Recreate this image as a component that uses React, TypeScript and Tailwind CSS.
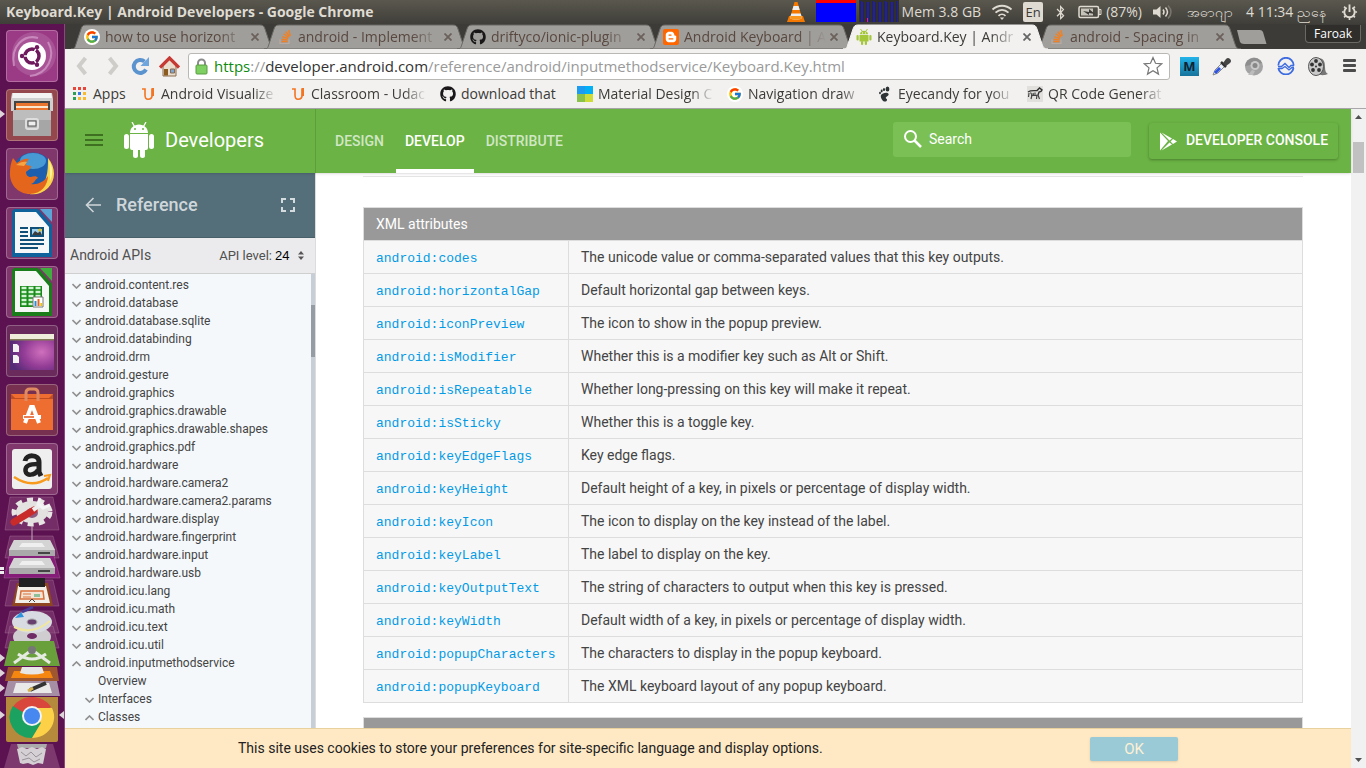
import React from "react";
import { FcGoogle } from "react-icons/fc";
import { FaGithub, FaBloggerB, FaBluetoothB } from "react-icons/fa";

const uiFont = "font-['Open_Sans','Noto_Sans',sans-serif]";
const roboto = "font-['Roboto',sans-serif]";

/* ---------- small icons ---------- */

const GoogleIcon = () => (
  <span className="flex size-4 items-center justify-center rounded-full bg-white">
    <FcGoogle size={14} />
  </span>
);
const GithubIcon = () => <FaGithub size={16} color="#191717" />;
const StackIcon = () => (
  <svg width="16" height="16" viewBox="0 0 16 16" fill="none">
    <path d="M3 10.500v4h9v-4" stroke="#b7aba3" strokeWidth="1.200" />
    <path d="M4.500 12.500h6M4.600 10.200l6 .7M5.200 7.600l5.700 1.900M6.600 4.800l5 3.600M8.700 2.500l3.700 5M11.800 1l1.500 6" stroke="#f08024" strokeWidth="1.400" />
  </svg>
);
const BloggerIcon = () => (
  <span className="flex size-4 items-center justify-center rounded-xs bg-[#ff6600]">
    <FaBloggerB size={12} color="#fff" />
  </span>
);
const AndroidSmall = () => (
  <svg width="16" height="16" viewBox="0 0 16 16" fill="#a4c639">
    <path d="M4 5.200C4 3.200 5.800 1.800 8 1.800s4 1.400 4 3.400zM3.500 6h9v6.500h-9z" />
    <rect x="0.500" y="6" width="2.200" height="5.500" rx="1" />
    <rect x="13.300" y="6" width="2.200" height="5.500" rx="1" />
    <rect x="5" y="12" width="2.200" height="4" rx="1" />
    <rect x="8.800" y="12" width="2.200" height="4" rx="1" />
    <path d="M4.500 0l2 2.500M11.500 0l-2 2.500" stroke="#a4c639" />
    <path d="M6 3.500h1v1H6zM9 3.500h1v1H9z" fill="#fff" />
  </svg>
);
const UdacityIcon = () => (
  <svg width="16" height="16" viewBox="0 0 16 16" fill="none" stroke="#f37421">
    <path d="M2 3h3v6c0 3 1 4.300 3 4.300 2.600 0 4.200-1.700 4.200-4.500V3" strokeWidth="1.600" />
    <path d="M12.700 2v8" strokeWidth="2.600" />
  </svg>
);
const AppsIcon = () => (
  <svg width="16" height="16" viewBox="0 0 16 16">
    {["#e8453c", "#e8453c", "#e8453c", "#2f9e55", "#3b78e7", "#f9bb2d", "#2f9e55", "#f9bb2d", "#f9bb2d"].map((c, i) => (
      <rect key={i} x={1 + (i % 3) * 5} y={1 + Math.floor(i / 3) * 5} width="3" height="3" fill={c} />
    ))}
  </svg>
);
const MaterialIcon = () => (
  <svg width="16" height="16">
    <path d="M0 0h8v8H0z" fill="#1d9bf0" />
    <path d="M8 0h8v8H8z" fill="#04b0f5" />
    <path d="M0 8h8v8H0z" fill="#8bc34a" />
    <path d="M8 8h8v8H8z" fill="#cddc39" />
  </svg>
);
const FootIcon = () => (
  <svg width="16" height="16" viewBox="0 0 16 16" fill="#2e3436">
    <ellipse cx="10.500" cy="3" rx="1.900" ry="2.600" />
    <ellipse cx="7" cy="3.500" rx="1.100" ry="1.600" />
    <ellipse cx="4.700" cy="5" rx="1" ry="1.400" />
    <ellipse cx="3" cy="7" rx=".9" ry="1.200" />
    <path d="M4 9c1-2 6.500-3.500 7.500-1.200.8 2-2.600 2.600-2.800 4 0 1 1.600.8 1.300 2.300-.4 2-3.500 2-4.700 0C4.400 12.500 3.300 11 4 9z" />
  </svg>
);
const ZebraIcon = () => (
  <svg width="16" height="16" viewBox="0 0 16 16">
    <rect width="16" height="16" fill="#e2e0dd" />
    <path d="M1 6c3-2 6-1 9-1.500L12.500 2 15 4l-1 1.500-2 .5-1 3" fill="none" stroke="#333" strokeWidth="1.400" />
    <path d="M2 7l-.5 4M3.500 6.500L5 9l-1 4M6 7l.5 2M8 6.500V9M11 9l1.500 4M10 8.500l-.5 4.500M4 9.500h6" fill="none" stroke="#444" strokeWidth="1.200" />
  </svg>
);

/* ---------- desktop panel ---------- */

function TopPanel() {
  return (
    <header className={`flex h-6 flex-none items-center bg-linear-to-b from-[#5a584e] to-[#3f3e39] text-[#dfdbd2] ${uiFont}`}>
      <h1 className="flex-1 truncate pl-[6px] text-[14px] leading-6 font-bold">Keyboard.Key | Android Developers - Google Chrome</h1>
      <div className="flex items-center gap-[10px] pr-2 text-[14px] leading-6 whitespace-nowrap">
        <svg width="20" height="22" viewBox="0 0 20 22" aria-label="VLC">
          <path d="M3 15h14l2 6H1z" fill="#f57900" />
          <path d="M8.500 1h3L16 17c-2 2-10 2-12 0z" fill="#f57900" />
          <path d="M7.500 5h5l1.200 4H6.300zM5.300 12.500h9.400L16 17c-2 2-10 2-12 0z" fill="#eee" />
          <path d="M4.700 15h10.600l.7 2c-2 2-10 2-12 0z" fill="#f8961e" />
        </svg>
        <div className="flex gap-[3px]">
          <svg width="40" height="22">
            <path d="M0 0h40v22H0z" fill="#00f" />
            <path d="M0 0h40v3H0z" fill="#f00" />
          </svg>
          <svg width="40" height="22">
            <path d="M0 0h40v22H0z" fill="#302f2b" />
            {Array.from({ length: 13 }, (_, i) => (
              <path key={i} d={`M${i * 3 + 1.5} ${i % 4 ? 2 : 1}v22`} stroke="#1616c0" />
            ))}
            <path d="M8.500 18v4" stroke="#f22" />
          </svg>
          <span>Mem 3.8 GB</span>
        </div>
        <svg width="22" height="18" viewBox="0 0 22 18" fill="none" stroke="#dfdbd2" strokeWidth="1.800">
          <path d="M1.500 6.500c5.500-5 13.500-5 19 0M4.500 9.700c4-3.600 9-3.600 13 0M7.500 12.800c2-2 5-2 7 0" />
          <path d="M11 17l-2.200-2.500h4.400z" fill="#dfdbd2" stroke="none" />
        </svg>
        <span className="flex h-5 w-5 items-center justify-center rounded-xs bg-[#dfdbd2] text-[13px] text-[#3c3b37]">En</span>
        <FaBluetoothB size={15} />
        <span className="flex items-center gap-1">
          <svg width="24" height="14" viewBox="0 0 24 14">
            <rect x="1" y="1.500" width="19.500" height="11" rx="1.500" fill="none" stroke="#dfdbd2" strokeWidth="1.500" />
            <path d="M21 4.500h2v5h-2z" fill="none" stroke="#dfdbd2" />
            <path d="M3 3.500h12v7H3z" fill="#c6c3bb" />
            <path d="M5 6l6 1V4l6 5-6-1v2z" fill="#3c3b37" />
          </svg>
          (87%)
        </span>
        <svg width="21" height="16" viewBox="0 0 21 16" fill="none" stroke="#dfdbd2" strokeWidth="1.500">
          <path d="M1 5.500h3.500L8.500 2v12l-4-3.500H1z" fill="#dfdbd2" stroke="none" />
          <path d="M11 5.500q2 2.500 0 5M13.500 3.500q4 4.500 0 9" />
          <path d="M16 1.500q6 6.500 0 13" stroke="#77756c" />
        </svg>
        <time className="flex w-[148px] justify-between px-1">
          <span>အဓာဂျာ</span>
          <span>4 11:34 ညနေ</span>
        </time>
        <svg width="17" height="18" viewBox="0 0 18 18" fill="none" stroke="#dfdbd2">
          <path d="M6 4.500a5.500 5.500 0 1 0 6 0" strokeWidth="2" />
          <path d="M9 1v8" strokeWidth="2" />
          <path d="M1 9h2M15 9h2M3.300 3.300l1.500 1.500M14.700 3.300l-1.500 1.500M3.300 14.700l1.500-1.500M14.700 14.700l-1.500-1.500M9 15v2.500" strokeWidth="1.800" />
        </svg>
      </div>
    </header>
  );
}

/* ---------- launcher ---------- */

const launcherItems = [
  {
    name: "Search your computer",
    tile: "bg-[#9b3b85]",
    icon: (
      <>
        <circle cx="28" cy="24" r="22" fill="#b364a3" opacity=".6" />
        <path d="M8 36C4 16 18 4 32 8M42 12c8 14 0 32-18 34" fill="none" stroke="#d59fcb" strokeWidth="2" opacity=".7" />
        <circle cx="26" cy="26" r="14" fill="#fff" />
        <circle cx="26" cy="26" r="7" fill="none" stroke="#6f1a5d" strokeWidth="3.500" />
        <path d="M26 26H12M26 26l6-11M26 26l6 11" stroke="#fff" strokeWidth="1.500" />
        <circle cx="26" cy="26" r="4.800" fill="#fff" />
        <circle cx="16" cy="26" r="2.200" fill="#6f1a5d" />
        <circle cx="31" cy="17.300" r="2.200" fill="#6f1a5d" />
        <circle cx="31" cy="34.700" r="2.200" fill="#6f1a5d" />
      </>
    ),
  },
  {
    name: "Files",
    tile: "bg-[#94474c]",
    icon: (
      <>
        <path d="M6 4h40l1 6v12H5V10z" fill="#cfcfcf" />
        <path d="M7 4h38l1 5H6z" fill="#f3f3f3" />
        <path d="M8 12h36v12H8z" fill="#444" />
        <path d="M10 14h32v7H10z" fill="#e9752f" />
        <path d="M10 17h32v2H10z" fill="#fbe6d0" />
        <path d="M7 21h38v10H7z" fill="#bdbdbd" />
        <path d="M7 31h38v16H7z" fill="#a6a6a6" />
        <rect x="20" y="30" width="12" height="10" rx="2" fill="#bbb" stroke="#dedede" strokeWidth="2" />
        <rect x="22" y="32" width="8" height="5" fill="#eee" stroke="#555" />
      </>
    ),
  },
  {
    name: "Firefox",
    tile: "bg-[#7f376c]",
    icon: (
      <>
        <circle cx="27" cy="25" r="20.500" fill="#1c5fae" />
        <ellipse cx="27" cy="13" rx="13" ry="8" fill="#5bb4e6" opacity=".7" />
        <path d="M42 10c8 10 8 22 0 30-7 7-17 8-24 4 12 0 20-6 22-14 2-7 2-13 2-20z" fill="#fbd34a" />
        <path d="M7 10l4 5c4-3 8-5 12-4-2 2-3 4-3 6l5 1c0 3-3 4-5 6 0 3 2 5 5 5 3-1 6-1 7 1-3 1-3 5-7 6 6 1 13-2 17-8 0 9-7 18-18 18C11 46 3 35 4 24c0-5 1-10 3-14z" fill="#e4661c" />
        <path d="M10 17c4-3 8-4 11-3l-3 4z" fill="#f6a545" />
        <path d="M43 13c4 6 4 14 1 20 0-6 0-13-1-20z" fill="#fff2a0" />
      </>
    ),
  },
  {
    name: "LibreOffice Writer",
    tile: "bg-[#7f376c]",
    icon: (
      <>
        <path d="M8 2h24l14 16v32H6V4z" fill="#10629c" />
        <path d="M34 2h12v13z" fill="#5aa5d6" />
        <path d="M9 5h21l13 15v26H9z" fill="#f5f7f8" />
        <path d="M14 21h8M14 25h8M14 29h8M14 33h24M14 37h24M14 41h18" stroke="#0f4f78" strokeWidth="2" />
        <path d="M24 20h14v10H24z" fill="#0f4f78" />
        <path d="M26 22h10v6H26z" fill="#9fd0ef" />
        <path d="M26 28l3-4 3 2 2-2 2 4z" fill="#3c3c3c" />
        <circle cx="34" cy="23" r="1.500" fill="#f3c200" />
      </>
    ),
  },
  {
    name: "LibreOffice Calc",
    tile: "bg-[#7f376c]",
    icon: (
      <>
        <path d="M8 2h24l14 16v32H6V4z" fill="#1a7d1a" />
        <path d="M34 2h12v13z" fill="#3fae3f" />
        <path d="M9 5h21l13 15v26H9z" fill="#f5f8f5" />
        <path d="M14 20h22v21H14z" fill="#168a16" />
        {[22, 26, 30, 34, 38].map((y) => (
          <path key={y} d={`M15.500 ${y}h5M22.500 ${y}h5M29.500 ${y}h5`} stroke="#d2f4d2" strokeWidth="2.500" />
        ))}
        <path d="M27 31h10v10H27z" fill="#fff" stroke="#777" />
        <path d="M29.500 40v-5" stroke="#2b8dd6" strokeWidth="2" />
        <path d="M32.500 40v-7" stroke="#e9641c" strokeWidth="2" />
        <path d="M35.300 40v-3" stroke="#e9c21c" strokeWidth="2" />
      </>
    ),
  },
  {
    name: "Desktop",
    tile: "bg-[#6a2a5b]",
    icon: (
      <>
        <defs>
          <radialGradient id="wallpaper" cx=".72" cy=".5" r=".75">
            <stop offset="0" stopColor="#d070bd" />
            <stop offset=".55" stopColor="#933c96" />
            <stop offset="1" stopColor="#532a75" />
          </radialGradient>
        </defs>
        <path d="M4 9h44v36H4z" fill="url(#wallpaper)" />
        <path d="M4 9h44v5H4z" fill="#f1eddb" />
        <path d="M4 14h44v1.500H4z" fill="#827d55" />
        <path d="M7 19h4l2 2v6H7zM7 30h4l2 2v6H7z" fill="#f2f2f2" />
      </>
    ),
  },
  {
    name: "Ubuntu Software",
    tile: "bg-[#77304f]",
    icon: (
      <>
        <path d="M5 10h42v36H5z" fill="#ee6d30" />
        <path d="M5 10l4 4h34l4-4v5H5z" fill="#bf4d1f" />
        <path d="M20 17V9q0-4 4-4h4q4 0 4 4v8" fill="none" stroke="#e08a62" strokeWidth="3" />
        <path d="M19 39l6-16h2l6 16" fill="none" stroke="#fff" strokeWidth="4" />
        <path d="M17 33h18" stroke="#fff" strokeWidth="4" />
        <path d="M18 33h10" stroke="#e2571d" strokeWidth="1.500" />
      </>
    ),
  },
  {
    name: "Amazon",
    tile: "bg-[#7f376c]",
    icon: (
      <>
        <rect x="6" y="6" width="40" height="40" rx="3" fill="#efefef" />
        <path d="M19 18c1-7 14-7 14 1v10l2 4" fill="none" stroke="#222" strokeWidth="5" />
        <path d="M32 21c-9 0-13 2-12.500 7 .5 5 9 5 12.500-1" fill="none" stroke="#222" strokeWidth="4.500" />
        <path d="M8 34q18 12 34 1" fill="none" stroke="#f79a1e" strokeWidth="2.500" />
        <path d="M38 33l6-1-2 6" fill="none" stroke="#f79a1e" strokeWidth="2" />
      </>
    ),
  },
];

const arrowRight = (y: number) => <path d={`M0 ${y - 4}l5 4-5 4z`} fill="#ddd5da" />;

function FoldedStack() {
  return (
    <svg className="block flex-none" width="65" height="200" viewBox="0 496 65 200" aria-label="Folded launcher items">
      <g fill="#8c4a7b" fillOpacity=".5" stroke="#b584a8" strokeOpacity=".35">
        <path d="M10 497h43l6 33H5z" />
        <path d="M10 536h43l6 22H5z" />
        <path d="M10 552h43l7 26H4z" fill="#8a1f7c" fillOpacity=".9" />
        <path d="M10 580h43l6 26H5z" />
        <path d="M10 611h43l6 22H5z" />
        <path d="M10 626h43l6 22H5z" />
      </g>
      <g fill="#d9d7d5">
        <ellipse cx="32" cy="512" rx="18" ry="12" fill="none" stroke="#e8e6e4" strokeWidth="5" strokeDasharray="6 5" />
        <ellipse cx="32" cy="512" rx="16" ry="11" fill="#e4e2e0" />
        <ellipse cx="32" cy="513" rx="6" ry="5" fill="#8c5b80" />
        <path d="M14 522l20-12" stroke="#c92b2b" strokeWidth="7" strokeLinecap="round" />
        <path d="M33 510l10-7" stroke="#eee" strokeWidth="4" />
        <path d="M40 498l-2 6 5 4 7-3" fill="none" stroke="#f4f4f4" strokeWidth="3" />
        <path d="M32 526v18" stroke="#c2aebb" />
      </g>
      {[540, 558].map((y) => (
        <g key={y}>
          <path d={`M14 ${y}h36l5 10v6H9v-6z`} fill="#aaa" />
          <path d={`M14 ${y}h36l5 10H9z`} fill="#d4d4d4" />
          <path d={`M22 ${y + 3}h20l3 4H19z`} fill="#efefef" />
          <path d={`M38 ${y + 13}h12`} stroke="#444" strokeWidth="2" />
        </g>
      ))}
      <path d="M17 583h31l5 23H12z" fill="#8f451f" />
      <path d="M18 586h28l4 17H15z" fill="#f2efe9" />
      <path d="M19 578h26v9H19z" fill="#222" />
      <path d="M21 591h22l1 8H20z" fill="#f4e4d6" stroke="#d8703c" strokeWidth="1.500" />
      <path d="M23 594h8M23 597h8" stroke="#d8703c" />
      <path d="M34 594h6v3h-6z" fill="#8fc09a" />
      <path d="M29 602l3-3 3 3" stroke="#444" fill="none" />
      <ellipse cx="32" cy="637" rx="19" ry="11" fill="#cfcdd0" />
      <ellipse cx="32" cy="636" rx="5" ry="3" fill="#6f2b66" />
      <ellipse cx="32" cy="622" rx="20" ry="11" fill="#d9dbe2" />
      <path d="M14 627q18 9 36-6" stroke="#efe6a0" strokeWidth="2" fill="none" />
      <ellipse cx="32" cy="622" rx="5" ry="3" fill="#68406f" stroke="#aaa" />
      <path d="M15 618l6-6 3 5z" fill="#2c93dd" />
      <path d="M22 612l11-5" stroke="#4a3a91" strokeWidth="3" />
      <path d="M10 641h44l6 25H4z" fill="#69a03c" />
      <path d="M14 663l15-11h6l15 11M18 654q14 10 28 0" stroke="#e5ebe0" strokeWidth="3" fill="none" />
      <circle cx="32" cy="650" r="4" fill="#777" />
      <path d="M8 667h49l2 14H5z" fill="#9f5730" />
      <path d="M14 671h36l3 7H11z" fill="#f58610" />
      <path d="M22 667h20l2 6q-12 3-24 0z" fill="#e7e7e7" />
      <path d="M8 681h49l3 15H4z" fill="#a68ea5" />
      <path d="M16 683h33l3 10H13z" fill="#e9e9e9" />
      <path d="M30 690l16-7" stroke="#333" strokeWidth="4" />
      <path d="M28 691l5-3" stroke="#d7b14c" strokeWidth="3" />
      <path d="M0 567h4v3H0zM0 571h4v3H0z" fill="#eee" />
      {arrowRight(658)}
      {arrowRight(673)}
      {arrowRight(688)}
    </svg>
  );
}

function Launcher() {
  return (
    <nav aria-label="Launcher" className="flex w-[65px] flex-none flex-col border-r border-[#8d4680] bg-[#5c1150] pt-[6px]">
      {launcherItems.map((item) => (
        <button
          key={item.name}
          aria-label={item.name}
          className={`relative mb-[7px] ml-[6px] size-13 flex-none rounded-[4px] border border-white/25 ${item.tile}`}
        >
          <svg className="-m-px block" width="52" height="52">
            {item.icon}
          </svg>
          {item.name === "Files" && (
            <svg className="absolute top-5 -left-[7px]" width="5" height="8">
              {arrowRight(4)}
            </svg>
          )}
        </button>
      ))}
      <div className="-mt-[6px] flex flex-none flex-col">
        <FoldedStack />
        <button aria-label="Chrome" className="block">
          <svg className="block" width="65" height="48" viewBox="0 696 65 48">
            <path d="M6 697h52v43q0 2-2 2H8q-2 0-2-2z" fill="#b58a3d" />
            <path d="M32 718L12.900 707a22 20 0 0 1 38.100 0z" fill="#d9463b" />
            <path d="M12.900 706L32 718l9 5-9 15A22 21 0 0 1 12.900 706z" fill="#1ba261" />
            <path d="M32 708h20a22 21 0 0 1-20 30l9-15z" fill="#fcd148" />
            <circle cx="32" cy="716" r="10" fill="#f3f3f3" />
            <circle cx="32" cy="716" r="8" fill="#4687f0" />
            {arrowRight(715)}
            <path d="M64 711l-5 4 5 4z" fill="#ddd5da" />
          </svg>
        </button>
        <button aria-label="Trash" className="block">
          <svg className="block" width="65" height="24" viewBox="0 744 65 24">
            <path d="M11 744h42l7 24H4z" fill="#8c4a7b" fillOpacity=".7" />
            <path d="M17 744h30l-1 4H18z" fill="#aaa" />
            <path d="M17 749l5-2 5 2 5-2 5 2 5-2 4 2-3 15-5-1-5 2-5-2-5 1-3-1z" fill="#d4d0d3" />
            <path d="M21 752l5 4 5-4 5 5 6-4M22 760l7-2 5 4 6-3" stroke="#9a929a" fill="none" />
          </svg>
        </button>
      </div>
    </nav>
  );
}

/* ---------- browser chrome ---------- */

const fade = "mask-r-from-80%";

const tabs = [
  { title: "how to use horizont", Icon: GoogleIcon, active: false },
  { title: "android - Implement", Icon: StackIcon, active: false },
  { title: "driftyco/ionic-plugin", Icon: GithubIcon, active: false },
  { title: "Android Keyboard | A", Icon: BloggerIcon, active: false },
  { title: "Keyboard.Key | Andr", Icon: AndroidSmall, active: true },
  { title: "android - Spacing in", Icon: StackIcon, active: false },
];

function TabStrip() {
  return (
    <div className="flex h-[25px] flex-none overflow-hidden bg-[#3c3b37] pl-[6px]">
      {tabs.map((t, i) => (
        <div
          key={i}
          className={`relative flex w-[193px] flex-none items-center pl-[13px] text-[14px] leading-6 ${t.active ? "z-10 text-[#3c3b37]" : "text-[#58483f]"}`}
        >
          <svg className="absolute top-0 left-0" width="209" height="25" viewBox="0 0 209 25">
            <path
              d="M0 25c4 0 4-2 5-5L10 5c1-3 2-4 5-4h174c3 0 4 1 5 4l5 15c1 3 2 5 6 5z"
              fill={t.active ? "#f2f1f0" : "#a09e9b"}
              stroke={t.active ? "#f2f1f0" : "#6b6964"}
            />
          </svg>
          <span className="relative flex w-4 flex-none justify-center">
            <t.Icon />
          </span>
          <span className={`relative ml-[5px] w-[142px] overflow-hidden whitespace-nowrap ${fade}`}>{t.title}</span>
          <button aria-label="Close tab" className="relative ml-1">
            <svg width="8" height="8" viewBox="0 0 8 8" stroke={t.active ? "#666" : "#6b605a"} strokeWidth="1.800">
              <path d="M.5.5l7 7M7.500.5l-7 7" />
            </svg>
          </button>
        </div>
      ))}
      <button aria-label="New tab" className="ml-1 flex flex-none items-center pl-[4px]">
        <svg width="30" height="14" viewBox="0 0 30 14">
          <path d="M0 0h23q2 0 3 2l3.500 12H7q-3 0-4-2z" fill="#a09e9b" />
        </svg>
      </button>
      <button className="mt-px mr-[5px] ml-auto h-[18px] w-14 flex-none self-start rounded-b-[4px] border border-t-0 border-[#6b6964] bg-[#2f2e2b] text-[12px] leading-4 text-white">
        Faroak
      </button>
    </div>
  );
}

function Toolbar() {
  return (
    <div className="flex h-[34px] flex-none items-center bg-[#f2f1f0] pr-[9px] pl-[10px]">
      <div className="flex w-[113px] flex-none items-center">
        <button aria-label="Back" className="w-8">
          <svg width="13" height="20" viewBox="0 0 13 20" fill="none" stroke="#cfcdca" strokeWidth="4">
            <path d="M10.500 2L4 10l6.500 8" />
          </svg>
        </button>
        <button aria-label="Forward" className="w-6">
          <svg width="13" height="20" viewBox="0 0 13 20" fill="none" stroke="#cfcdca" strokeWidth="4">
            <path d="M2.500 2L9 10l-6.500 8" />
          </svg>
        </button>
        <button aria-label="Reload" className="w-7">
          <svg width="19" height="20" viewBox="0 0 19 20">
            <path d="M15 13.500a6.500 6.500 0 1 1-1.500-8" fill="none" stroke="#5b93cf" strokeWidth="4" />
            <path d="M18 1v9H9.500z" fill="#6ea5dc" />
          </svg>
        </button>
        <button aria-label="Home">
          <svg width="21" height="21" viewBox="0 0 21 21">
            <path d="M4 10l6.500-7 6.500 7v10H4z" fill="#eadfce" stroke="#8b6a4f" />
            <path d="M5 13h4v6.500H5z" fill="#8b5a1e" />
            <path d="M11.500 13h4v4h-4z" fill="#7aa6d8" stroke="#8b6a4f" />
            <path d="M1 11.500L10.500 2l9.500 9.500" fill="none" stroke="#c63a34" strokeWidth="3.200" />
          </svg>
        </button>
      </div>
      <div className="flex h-[27px] min-w-0 flex-1 items-center rounded-[3px] border border-[#bab8b5] bg-white px-[6px]">
        <svg className="flex-none" width="13" height="17" viewBox="0 0 13 17">
          <path d="M3 8V5a3.500 3.500 0 0 1 7 0v3" fill="none" stroke="#8b8b8b" strokeWidth="2" />
          <rect x="1" y="7" width="11" height="9" rx="1" fill="#7ed062" stroke="#5a9c42" />
        </svg>
        <span className="ml-[6px] min-w-0 flex-1 truncate text-[15px] leading-6 text-[#9a9a9a]">
          <span className="text-[#0f8b0f]">https</span>://<span className="text-[#333]">developer.android.com</span>
          /reference/android/inputmethodservice/Keyboard.Key.html
        </span>
        <button aria-label="Bookmark this page">
          <svg width="20" height="20" viewBox="0 0 20 20" fill="#fff" stroke="#777" strokeWidth="1.200">
            <path d="M10 1.500l2.500 5.800 6.200.5-4.700 4.100 1.500 6.200-5.500-3.400-5.500 3.400L6 11.900 1.300 7.800l6.200-.5z" />
          </svg>
        </button>
      </div>
      <div className="ml-[10px] flex flex-none items-center gap-[13px]">
        <span className="flex size-[19px] items-center justify-center bg-linear-to-b from-[#22b4ea] to-[#17739b] text-[13px] leading-none font-bold text-[#112233]">M</span>
        <svg width="19" height="19" viewBox="0 0 19 19">
          <path d="M1 18l2-5 7-7 3 3-7 7z" fill="#e8eefb" stroke="#888" />
          <path d="M3 16l5-5" stroke="#2f55e0" strokeWidth="3" />
          <path d="M9 5l5 5" stroke="#333" strokeWidth="2.500" />
          <path d="M11 6l3-4q2-2 4 0t0 4l-4 3z" fill="#444" />
        </svg>
        <svg width="20" height="19" viewBox="0 0 20 19">
          <circle cx="10" cy="9.500" r="9" fill="#a3a3a3" />
          <path d="M1 9a9 9 0 0 1 17-3z" fill="#8d8d8d" />
          <circle cx="11" cy="8.500" r="4.500" fill="#c9c9c9" />
          <circle cx="11" cy="8.500" r="2.500" fill="#888" />
          <path d="M4 18l4-5 3 1-2 4z" fill="#bcbcbc" />
        </svg>
        <svg width="18" height="18" viewBox="0 0 18 18" fill="none" stroke="#3d6be0" strokeWidth="1.800">
          <path d="M1.300 8.500a7.700 7.700 0 0 1 15.400 0M1.300 11a7.700 7.700 0 0 0 15.200 0" />
          <path d="M1 9.500h3.500L8 6.500l4 4 2-2h3M1.500 11.500h3.500l3-2 4 3.500 3-2.500h2" strokeWidth="1.300" />
        </svg>
        <svg width="20" height="19" viewBox="0 0 20 19">
          <path d="M10 1c6 0 7 4 7 9 0 4 1 6 3 7-5 2-8 1-10 0z" fill="#777" />
          <ellipse cx="8" cy="9.500" rx="7.500" ry="9" fill="#c9c9c9" stroke="#555" />
          <g fill="#333">
            <circle cx="8" cy="4" r="1.900" />
            <circle cx="4" cy="7.500" r="1.900" />
            <circle cx="12" cy="7.500" r="1.900" />
            <circle cx="5" cy="13" r="1.900" />
            <circle cx="11" cy="13" r="1.900" />
            <circle cx="8" cy="9.500" r="1" />
          </g>
        </svg>
        <button aria-label="Menu" className="ml-[2px]">
          <svg className="block" width="14" height="14" fill="#4c4c4c">
            <rect width="13" height="3" y="0" rx="1" />
            <rect width="13" height="3" y="5" rx="1" />
            <rect width="13" height="3" y="10" rx="1" />
          </svg>
        </button>
      </div>
    </div>
  );
}

const bookmarks = [
  { title: "Apps", Icon: AppsIcon, width: "w-[34px]", cut: false },
  { title: "Android Visualize", Icon: UdacityIcon, width: "w-[116px]", cut: true },
  { title: "Classroom - Udac", Icon: UdacityIcon, width: "w-[116px]", cut: true },
  { title: "download that", Icon: GithubIcon, width: "w-[103px]", cut: false },
  { title: "Material Design C", Icon: MaterialIcon, width: "w-[116px]", cut: true },
  { title: "Navigation draw", Icon: GoogleIcon, width: "w-[116px]", cut: true },
  { title: "Eyecandy for you", Icon: FootIcon, width: "w-[116px]", cut: true },
  { title: "QR Code Generat", Icon: ZebraIcon, width: "w-[116px]", cut: true },
];

function BookmarksBar() {
  return (
    <div className="flex h-[26px] flex-none gap-[13px] overflow-hidden border-b border-[#a9a7a9] bg-[#f2f1f0] pb-[3px] pl-[7px] text-[14px] leading-[22px] text-[#3c3b37]">
      {bookmarks.map(({ title, Icon, width, cut }) => (
        <a key={title} href="#" className="flex flex-none items-center gap-[5px]">
          <Icon />
          <span className={`whitespace-nowrap ${width} ${cut ? fade : ""}`}>{title}</span>
        </a>
      ))}
    </div>
  );
}

/* ---------- web page ---------- */

function SiteHeader() {
  return (
    <header className="relative z-10 flex h-16 flex-none items-center bg-[#6bb344] text-white shadow-sm">
      <div className="flex h-full w-[251px] flex-none items-center border-r border-[#5b9f38] pb-[2px] pl-5">
        <button aria-label="Open menu">
          <svg className="block" width="18" height="12" fill="#3f7022">
            <path d="M0 0h18v2H0zM0 5h18v2H0zM0 10h18v2H0z" />
          </svg>
        </button>
        <a href="#" className="flex items-center pl-[21px] text-[20px] leading-8">
          <svg className="mr-[11px]" width="30" height="36" viewBox="0 0 30 36" fill="#fff">
            <path d="M6 11c0-5 4-8.500 9-8.500s9 3.500 9 8.500zM6 12h18v14q0 2-2 2H8q-2 0-2-2z" />
            <rect x="0" y="12" width="5" height="15" rx="2.500" />
            <rect x="25" y="12" width="5" height="15" rx="2.500" />
            <rect x="9" y="24" width="5" height="12" rx="2.500" />
            <rect x="16" y="24" width="5" height="12" rx="2.500" />
            <path d="M8 0l2.500 4.500M22 0l-2.500 4.500" stroke="#fff" strokeWidth="1.300" />
            <circle cx="11" cy="7" r="1" fill="#6bb344" />
            <circle cx="19" cy="7" r="1" fill="#6bb344" />
          </svg>
          Developers
        </a>
      </div>
      <nav className="flex h-full gap-[3px] pl-[10px] text-[14px] leading-[64px] font-medium">
        <a href="#" className="border-b-4 border-transparent px-[9px] text-white/70">DESIGN</a>
        <a href="#" className="border-b-4 border-white px-[9px]">DEVELOP</a>
        <a href="#" className="border-b-4 border-transparent px-[9px] text-white/70">DISTRIBUTE</a>
      </nav>
      <label className="mr-[18px] mb-[3px] ml-auto flex h-[35px] w-[238px] items-center rounded-[3px] bg-[#7ac055] pb-px pl-[11px]">
        <svg width="18" height="18" viewBox="0 0 18 18" fill="none" stroke="#fff" strokeWidth="2">
          <circle cx="6.500" cy="6.500" r="5.500" />
          <path d="M10.500 10.500L17 17" strokeWidth="2.500" />
        </svg>
        <input
          type="text"
          aria-label="Search"
          placeholder="Search"
          className="ml-[7px] w-40 bg-transparent text-[14px] leading-5 outline-none placeholder:text-white"
        />
      </label>
      <a href="#" className="mr-[13px] flex h-9 w-[189px] flex-none items-center justify-center gap-[9px] rounded-[3px] bg-[#6bb344] pb-[2px] text-[14px] leading-5 font-medium shadow-[0_1px_3px_rgba(0,0,0,0.3)]">
        <svg className="mt-[3px]" width="18" height="19" viewBox="0 0 18 19" fill="#fff">
          <path d="M1 .5L9 9l-8 9.500zM2.500.5L13 6.500 10.500 8.500zM14 7l4 2.500-4 2.500-2.500-2.500zM2.500 18.500L10.500 10.500l2.500 2z" />
        </svg>
        DEVELOPER CONSOLE
      </a>
    </header>
  );
}

type Entry = { label: string; open?: boolean; level?: number; leaf?: boolean };
const entries: Entry[] = [
  ...[
    "content.res", "database", "database.sqlite", "databinding", "drm", "gesture", "graphics", "graphics.drawable",
    "graphics.drawable.shapes", "graphics.pdf", "hardware", "hardware.camera2", "hardware.camera2.params",
    "hardware.display", "hardware.fingerprint", "hardware.input", "hardware.usb", "icu.lang", "icu.math", "icu.text", "icu.util",
  ].map((n) => ({ label: "android." + n })),
  { label: "android.inputmethodservice", open: true },
  { label: "Overview", level: 1, leaf: true },
  { label: "Interfaces", level: 1 },
  { label: "Classes", level: 1, open: true },
];

function Sidebar() {
  return (
    <aside className="flex w-[251px] flex-none flex-col border-r border-[#dcdcdc]">
      <div className="flex h-[65px] flex-none items-center border-b border-[#486069] bg-[#546e7a] px-5 text-[#cfd6da]">
        <button aria-label="Back to overview">
          <svg className="block" width="17" height="16" viewBox="0 0 17 16" fill="none" stroke="#cfd6da" strokeWidth="1.600">
            <path d="M16 8H1.500M8.500 1l-7 7 7 7" />
          </svg>
        </button>
        <h2 className="flex-1 pl-[14px] text-[18px] leading-6 font-medium">Reference</h2>
        <button aria-label="Full screen">
          <svg className="block" width="14" height="14" fill="none" stroke="#d5dcdf" strokeWidth="2">
            <path d="M1 5V1h4M9 1h4v4M13 9v4H9M5 13H1V9" />
          </svg>
        </button>
      </div>
      <div className="flex h-9 flex-none items-center border-b border-[#cfcfcf] bg-[#ebebed] pl-[5px] text-[#505050]">
        <span className="flex-1 pb-px text-[14px] leading-5">Android APIs</span>
        <label className="flex items-center text-[13px] leading-5">
          API level:
          <select defaultValue="24" className="ml-[3px] w-[15px] appearance-none bg-transparent font-['Liberation_Sans',sans-serif] text-[13px] text-black">
            <option>24</option>
          </select>
          <svg className="mr-[11px] ml-2" width="6" height="9" fill="#555">
            <path d="M3 0l3 3.500H0zM0 5.500h6L3 9z" />
          </svg>
        </label>
      </div>
      <div className="flex min-h-0 flex-1 bg-[#f4f8fb]">
        <ul className="flex-1 overflow-hidden pt-[2px] text-[12px] leading-[18px] text-[#444]">
          {entries.map((e) => (
            <li key={e.label} className={e.level ? "pl-[20px]" : "pl-[7px]"}>
              <a href="#" className="flex items-center">
                <svg className="mt-px mr-1 flex-none" width="9" height="6" viewBox="0 0 9 6" fill="none" stroke="#8f8f8f" strokeWidth="1.600">
                  {!e.leaf && <path d={e.open ? "M.5 5l4-4 4 4" : "M.5 1l4 4 4-4"} />}
                </svg>
                {e.label}
              </a>
            </li>
          ))}
        </ul>
        <div className="w-1 flex-none bg-[#c6cfd5] pt-[31px]">
          <div className="h-[52px] bg-[#949da3]" />
        </div>
      </div>
    </aside>
  );
}

const attributes = [
  ["codes", "The unicode value or comma-separated values that this key outputs."],
  ["horizontalGap", "Default horizontal gap between keys."],
  ["iconPreview", "The icon to show in the popup preview."],
  ["isModifier", "Whether this is a modifier key such as Alt or Shift."],
  ["isRepeatable", "Whether long-pressing on this key will make it repeat."],
  ["isSticky", "Whether this is a toggle key."],
  ["keyEdgeFlags", "Key edge flags."],
  ["keyHeight", "Default height of a key, in pixels or percentage of display width."],
  ["keyIcon", "The icon to display on the key instead of the label."],
  ["keyLabel", "The label to display on the key."],
  ["keyOutputText", "The string of characters to output when this key is pressed."],
  ["keyWidth", "Default width of a key, in pixels or percentage of display width."],
  ["popupCharacters", "The characters to display in the popup keyboard."],
  ["popupKeyboard", "The XML keyboard layout of any popup keyboard."],
];

function Article() {
  return (
    <main className="min-w-0 flex-1 overflow-hidden bg-white pr-12 pl-[47px]">
      <hr className="mt-[3px] border-[#e5e5e5]" />
      <table className="mt-[30px] w-full border-collapse bg-[#f7f7f7] text-left text-[14px] leading-4 text-[#444]">
        <thead>
          <tr className="h-[33px] bg-[#999] text-white">
            <th colSpan={2} className="border border-[#ddd] px-3 font-normal">XML attributes</th>
          </tr>
        </thead>
        <tbody>
          {attributes.map(([name, text]) => (
            <tr key={name} className="h-[33px]">
              <td className="w-[205px] border border-[#ddd] px-3 pt-[2px]">
                <a href="#" className="font-['Liberation_Mono',monospace] text-[13px] text-[#039be5]">android:{name}</a>
              </td>
              <td className="border border-[#ddd] px-3">{text}</td>
            </tr>
          ))}
        </tbody>
      </table>
      <div className="mt-[14px] h-10 border border-[#ddd] bg-[#999]" />
    </main>
  );
}

function CookieBar() {
  return (
    <footer className="flex h-10 flex-none items-center justify-between border-t border-[#e8d19c] bg-[#ffe9c4] px-[173px] text-[14px] leading-5 text-[#222]">
      <p className="pb-px">This site uses cookies to store your preferences for site-specific language and display options.</p>
      <button className="h-6 w-22 rounded-xs bg-[#9acad5] text-[15px] leading-6 text-[#fdf0d5] shadow-sm">OK</button>
    </footer>
  );
}

function PageScrollbar() {
  return (
    <div className="flex w-[15px] flex-none flex-col items-center bg-[#f1f1f1] py-[6px]">
      <svg width="7" height="4" fill="#505050">
        <path d="M3.500 0L7 4H0z" />
      </svg>
      <div className="mt-[23px] h-[31px] w-[11px] bg-[#c1c1c1]" />
      <svg className="mt-auto" width="7" height="4" fill="#505050">
        <path d="M3.500 4L7 0H0z" />
      </svg>
    </div>
  );
}

export default function App() {
  return (
    <div className="flex h-screen flex-col overflow-hidden">
      <TopPanel />
      <div className="flex min-h-0 flex-1">
        <Launcher />
        <div className={`flex min-w-0 flex-1 flex-col ${uiFont}`}>
          <TabStrip />
          <Toolbar />
          <BookmarksBar />
          <div className={`flex min-h-0 flex-1 ${roboto}`}>
            <div className="flex min-w-0 flex-1 flex-col">
              <SiteHeader />
              <div className="flex min-h-0 flex-1">
                <Sidebar />
                <Article />
              </div>
              <CookieBar />
            </div>
            <PageScrollbar />
          </div>
        </div>
      </div>
    </div>
  );
}
